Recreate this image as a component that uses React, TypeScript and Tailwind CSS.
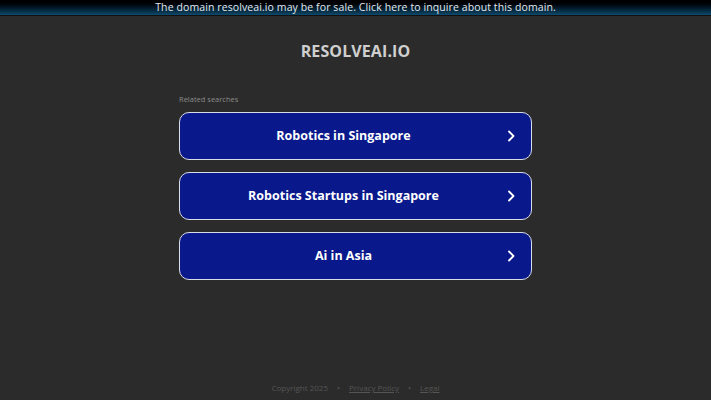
import React from 'react'

const searches = ['Robotics in Singapore', 'Robotics Startups in Singapore', 'Ai in Asia']

function Chevron() {
  return (
    <svg width="12" height="12" viewBox="0 0 12 12" fill="none" className="absolute right-[14px] top-1/2 -translate-y-1/2">
      <path d="M4 1.5 L8.5 6 L4 10.5" stroke="#ffffff" strokeWidth="1.8" strokeLinecap="round" strokeLinejoin="round" />
    </svg>
  )
}

export default function App() {
  return (
    <div className="w-[711px] h-[400px] bg-[#2b2b2b] flex flex-col overflow-hidden" style={{ fontFamily: '"Open Sans", sans-serif' }}>
      {/* sale banner */}
      <div className="h-[16px] shrink-0 bg-gradient-to-b from-[#000000] to-[#0f4a6c] border-b border-[#111] flex items-center justify-center">
        <span className="text-[10.5px] leading-none text-[#e4e8ee] tracking-[0.1px]">
          The domain resolveai.io may be for sale. Click here to inquire about this domain.
        </span>
      </div>

      <div className="flex flex-col items-center pt-[25px]">
        <h1 className="text-[16px] font-bold tracking-[0.1px] text-[#cfcfcf] leading-[20px]">RESOLVEAI.IO</h1>
      </div>

      <div className="w-[353px] mx-auto mt-[33px]">
        <div className="text-[7.5px] text-[#8a8a8a] leading-[10px] mb-[8px]">Related searches</div>
        <div className="flex flex-col gap-[12px]">
          {searches.map((s) => (
            <div
              key={s}
              className="relative h-[48px] rounded-[10px] border border-[#dadde9] bg-[#09198b] flex items-center justify-center pr-[24px]"
            >
              <span className="text-[12.5px] font-bold text-white">{s}</span>
              <Chevron />
            </div>
          ))}
        </div>
      </div>

      <div className="mt-auto mb-[6px] flex items-center justify-center gap-[9px] text-[8px] text-[#555]">
        <span>Copyright 2025</span>
        <span>•</span>
        <span className="underline">Privacy Policy</span>
        <span>•</span>
        <span className="underline">Legal</span>
      </div>
    </div>
  )
}
